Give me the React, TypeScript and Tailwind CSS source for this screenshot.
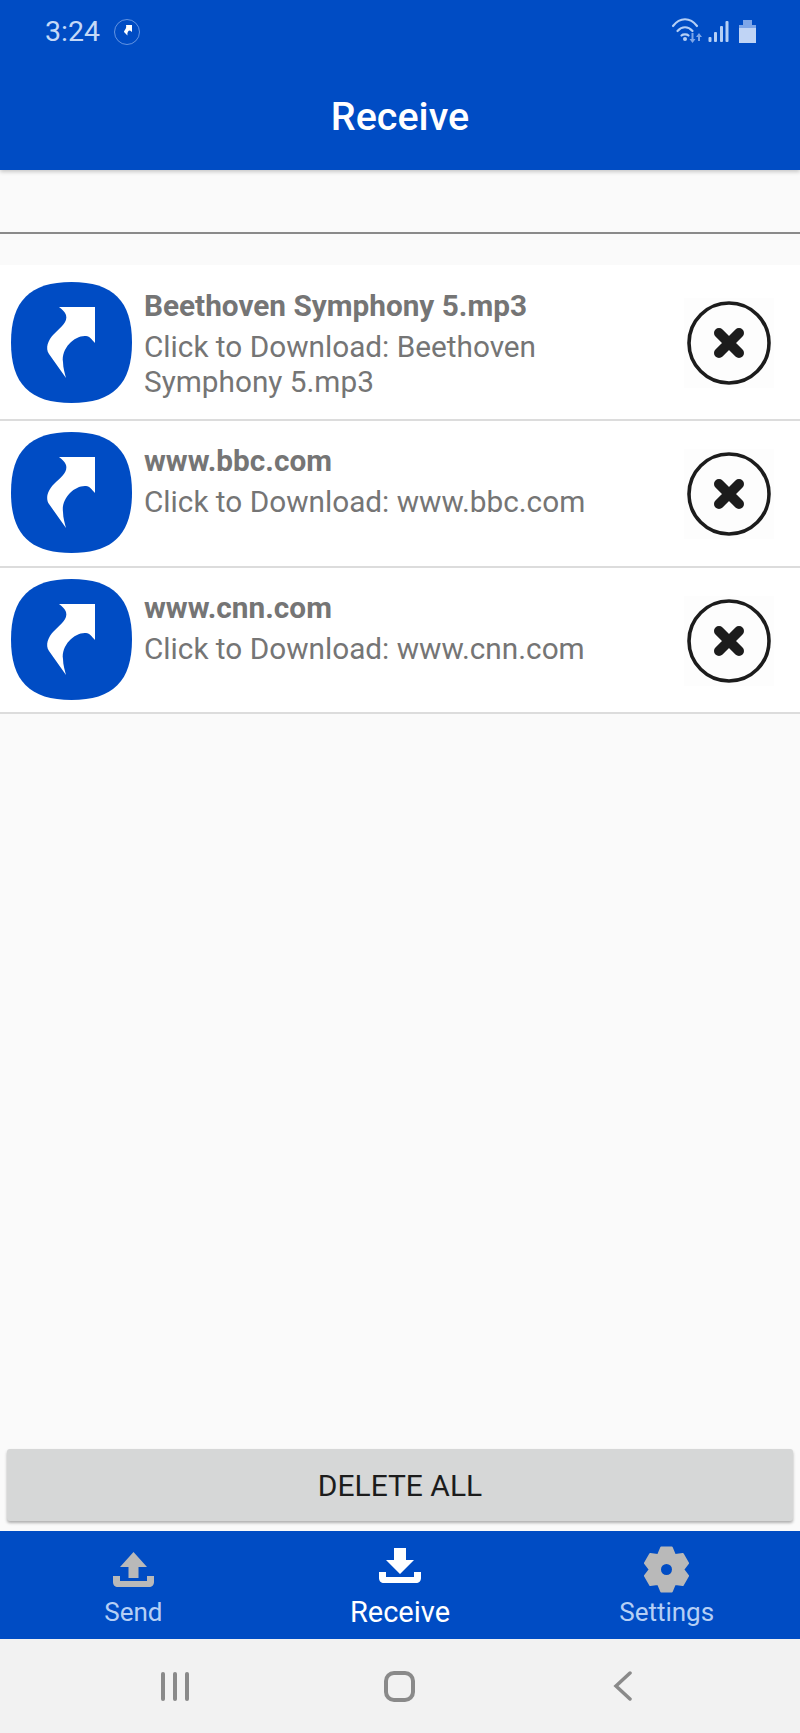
const ITEMS = [
  { title: "Beethoven Symphony 5.mp3", body: "Click to Download: Beethoven Symphony 5.mp3", rowClass: "h-[156px]", iconClass: "mt-[17px]", textClass: "mt-[19px]", closeClass: "mt-[33px]" },
  { title: "www.bbc.com", body: "Click to Download: www.bbc.com", rowClass: "h-[147px]", iconClass: "mt-[11px]", textClass: "mt-[18px]", closeClass: "mt-[28px]" },
  { title: "www.cnn.com", body: "Click to Download: www.cnn.com", rowClass: "h-[146px]", iconClass: "mt-[11px]", textClass: "mt-[18px]", closeClass: "mt-[28px]" },
];

const ShareIcon = () => (
  <svg viewBox="0 0 121 121" className="w-[121px] h-[121px] shrink-0">
    <path
      d="M60.500 0C102 0 121 19 121 60.500C121 102 102 121 60.500 121C19 121 0 102 0 60.500C0 19 19 0 60.500 0Z"
      fill="#004cc4"
    />
    <path
      d="M48 25L84 25L84 61C81 58 79 54 75 54C64 53 50 66 52 80C52 86 54 92 55 96L38 72C34 66 37 58 43 52C50 45 57 40 55 33C54 30 51 27 48 25Z"
      fill="#fff"
    />
  </svg>
);

const CloseIcon = () => (
  <div className="w-[90px] h-[90px] flex items-center justify-center bg-[#fdfdfd]">
    <svg viewBox="0 0 84 84" className="w-[84px] h-[84px]">
      <circle cx="42" cy="42" r="40" fill="none" stroke="#1c1c1c" strokeWidth="3.6" />
      <path d="M32 32L52 52M52 32L32 52" stroke="#1c1c1c" strokeWidth="10" strokeLinecap="round" />
    </svg>
  </div>
);

const Row = ({ item }: { item: (typeof ITEMS)[number] }) => (
  <div className={`flex bg-white border-b-2 border-[#dcdcdc] ${item.rowClass}`}>
    <div className={`ml-[11px] ${item.iconClass}`}>
      <ShareIcon />
    </div>
    <div className={`ml-[12px] w-[470px] ${item.textClass} text-[#757575] text-[29.750px] leading-[35px]`}>
      <div className="font-bold leading-[44px] mb-[1px]">{item.title}</div>
      <div>{item.body}</div>
    </div>
    <div className={`ml-auto mr-[26px] ${item.closeClass}`}>
      <CloseIcon />
    </div>
  </div>
);

const UploadIcon = () => (
  <svg viewBox="0 0 41 36" className="w-[41px] h-[36px]">
    <path d="M20.500 0L34 15L25.500 15L25.500 26L15.500 26L15.500 15L7 15Z" fill="#b9b9b9" />
    <path d="M0 24L7 24L7 29L34 29L34 24L41 24L41 30C41 33 39 35 36 35L5 35C2 35 0 33 0 30Z" fill="#b9b9b9" />
  </svg>
);

const DownloadIcon = () => (
  <svg viewBox="0 0 42 36" className="w-[42px] h-[36px]">
    <path d="M15 0L27 0L27 12L35 12L21 26L7 12L15 12Z" fill="#fff" />
    <path d="M0 24L7 24L7 29L35 29L35 24L42 24L42 30C42 33 40 35 37 35L5 35C2 35 0 33 0 30Z" fill="#fff" />
  </svg>
);

// six teeth, one pointing straight up
const GEAR_POINTS = Array.from({ length: 6 }, (_, i) => {
  const a = (Math.PI / 3) * i - Math.PI / 2;
  return [
    [a - 0.5, 17],
    [a - 0.24, 22.5],
    [a + 0.24, 22.5],
    [a + 0.5, 17],
  ]
    .map(([t, r]) => `${(22.5 + r * Math.cos(t)).toFixed(1)},${(23.5 + r * Math.sin(t)).toFixed(1)}`)
    .join(" ");
}).join(" ");

const GearIcon = () => (
  <svg viewBox="0 0 45 47" className="w-[45px] h-[47px]">
    <polygon points={GEAR_POINTS} fill="#b9b9b9" stroke="#b9b9b9" strokeWidth="2" strokeLinejoin="round" />
    <circle cx="22.500" cy="23.500" r="5.500" fill="#004cc4" />
  </svg>
);

const StatusIcons = () => (
  <svg viewBox="0 0 90 30" className="w-[90px] h-[30px]">
    <g fill="none" stroke="#b5cff5" strokeWidth="2.2" strokeLinecap="round">
      <path d="M3 11C10 2 20 2 27 11" />
      <path d="M7.500 16C12 11 18 11 22.500 16" />
      <path d="M11.500 20.500C13 19 17 19 18.500 20.500" />
    </g>
    <circle cx="15" cy="24" r="2" fill="#b5cff5" />
    <path d="M21.500 18h2v6h2l-3 4l-3-4h2Z" fill="#7ea6e8" />
    <path d="M29 18l3 4h-2v4h-2v-4h-2Z" fill="#7ea6e8" />
    <g fill="#b5cff5">
      <rect x="38.500" y="22" width="3" height="5" rx="1" />
      <rect x="44" y="17" width="3" height="10" rx="1" />
      <rect x="50" y="11" width="3" height="16" rx="1" />
      <rect x="55.500" y="6" width="3" height="21" rx="1" />
    </g>
    <path d="M69 10h4V5h9v5h4v18h-17Z" fill="#c0d4f5" />
    <path d="M69 10h4V5h9v5h4v3h-17Z" fill="#7ea6e8" />
  </svg>
);

const TABS = [
  { label: "Send", icon: <UploadIcon />, active: false, iconClass: "mt-[6px]" },
  { label: "Receive", icon: <DownloadIcon />, active: true, iconClass: "mt-[2px]" },
  { label: "Settings", icon: <GearIcon />, active: false, iconClass: "mt-0" },
];

export default function App() {
  return (
    <div className="w-[800px] h-[1733px] flex flex-col bg-[#fafafa] font-['Roboto',sans-serif]">
      <header className="h-[170px] shrink-0 bg-[#004cc4] shadow-[0_2px_4px_rgba(0,0,0,0.2)] z-10 flex flex-col">
        <div className="flex items-center h-[64px] pl-[45px] pr-[40px]">
          <span className="text-[28.500px] text-[#c5d9f7]">3:24</span>
          <svg viewBox="0 0 28 28" className="w-[28px] h-[28px] ml-[13px]">
            <circle cx="14" cy="14" r="12.500" fill="none" stroke="#7ea6e8" strokeWidth="0.8" />
            <path d="M13 7h6v7l-2-1.500c-2 0-3 2-2.500 5L11 14c0-2 3-3 2-7Z" fill="#fff" />
          </svg>
          <div className="ml-auto -mt-[4px]">
            <StatusIcons />
          </div>
        </div>
        <h1 className="text-center text-white text-[39.500px] font-medium leading-[56px] mt-[25px]">Receive</h1>
      </header>

      <div className="h-[64px] shrink-0 border-b-2 border-[#8a8a8a]" />

      <div className="mt-[31px] flex-1">
        {ITEMS.map((item, key) => (
          <Row key={key} item={item} />
        ))}
      </div>

      <div className="px-[7px] pb-[10px]">
        <button className="w-full h-[72px] rounded-[3px] bg-[#d6d7d7] shadow-[0_2px_3px_rgba(0,0,0,0.3)] text-[#1c1c1c] text-[30px] font-[450]">
          DELETE ALL
        </button>
      </div>

      <nav className="h-[108px] shrink-0 bg-[#004cc4] grid grid-cols-3">
        {TABS.map((tab) => (
          <div key={tab.label} className="flex flex-col items-center pt-[15px]">
            <div className="h-[48px] flex items-start">
              <div className={tab.iconClass}>{tab.icon}</div>
            </div>
            <span className={tab.active ? "text-white text-[29px] leading-[36px]" : "text-[#b5cff5] text-[26px] leading-[36px]"}>
              {tab.label}
            </span>
          </div>
        ))}
      </nav>

      <div className="h-[94px] shrink-0 bg-[#f2f2f2] flex items-center pl-[63px]">
        <div className="w-[672px] grid grid-cols-3 justify-items-center items-center">
          <div className="flex gap-[8px]">
            <span className="w-[4px] h-[29px] rounded-full bg-[#8a8a8a]" />
            <span className="w-[4px] h-[29px] rounded-full bg-[#8a8a8a]" />
            <span className="w-[4px] h-[29px] rounded-full bg-[#8a8a8a]" />
          </div>
          <div className="w-[31px] h-[31px] rounded-[10px] border-[4px] border-[#8a8a8a]" />
          <svg viewBox="0 0 20 30" className="w-[20px] h-[30px]">
            <path d="M17 2L3 15L17 28" fill="none" stroke="#8a8a8a" strokeWidth="3.500" strokeLinecap="round" />
          </svg>
        </div>
      </div>
    </div>
  );
}
